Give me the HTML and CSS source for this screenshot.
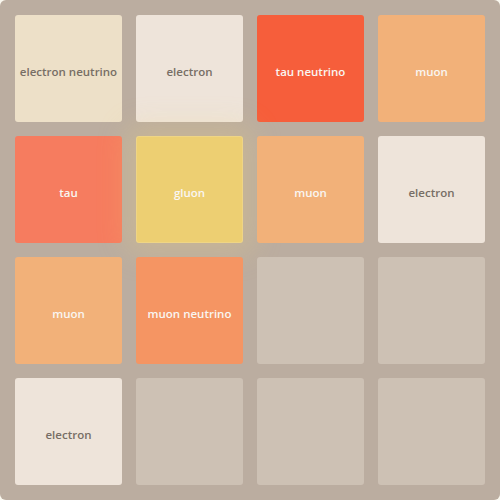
FILE: index.html
```html
<!DOCTYPE html>
<html>
<head>
<meta charset="utf-8">
<link rel="stylesheet" href="styles.css">
</head>
<body>
<div class="grid">
  <div class="tile t-en dark">electron neutrino</div>
  <div class="tile t-e dark">electron</div>
  <div class="tile t-tn">tau neutrino</div>
  <div class="tile t-mu">muon</div>
  <div class="tile t-tau">tau</div>
  <div class="tile t-g">gluon</div>
  <div class="tile t-mu">muon</div>
  <div class="tile t-e dark">electron</div>
  <div class="tile t-mu">muon</div>
  <div class="tile t-mn">muon neutrino</div>
  <div class="tile empty"></div>
  <div class="tile empty"></div>
  <div class="tile t-e dark">electron</div>
  <div class="tile empty"></div>
  <div class="tile empty"></div>
  <div class="tile empty"></div>
</div>
</body>
</html>
```
FILE: styles.css
```css
html, body { margin: 0; padding: 0; background: #faf8ef; }
.grid {
  width: 500px;
  height: 500px;
  box-sizing: border-box;
  padding: 15px;
  background: #bbada0;
  border-radius: 6px;
  display: grid;
  grid-template-columns: repeat(4, 107px);
  grid-template-rows: repeat(4, 107px);
  gap: 14px;
}
.tile {
  border-radius: 3px;
  display: flex;
  align-items: center;
  justify-content: center;
  padding-top: 5px;
  box-sizing: border-box;
  font-family: "Open Sans", sans-serif;
  font-weight: 600;
  font-size: 11.5px;
  color: #f9f6f2;
  white-space: nowrap;
}
.dark { color: #776e65; }
.empty { background: #cdc1b4; }
.t-e { background: #eee4da; }
.t-en { background: #ede0c8; }
.t-mu { background: #f2b179; }
.t-mn { background: #f59563; }
.t-tau { background: #f67c5f; }
.t-tn { background: #f65e3b; }
.t-g { background: #edcf72; box-shadow: 0 0 30px 10px rgba(243, 215, 116, 0.24), inset 0 0 0 1px rgba(255, 255, 255, 0.14); }
```
